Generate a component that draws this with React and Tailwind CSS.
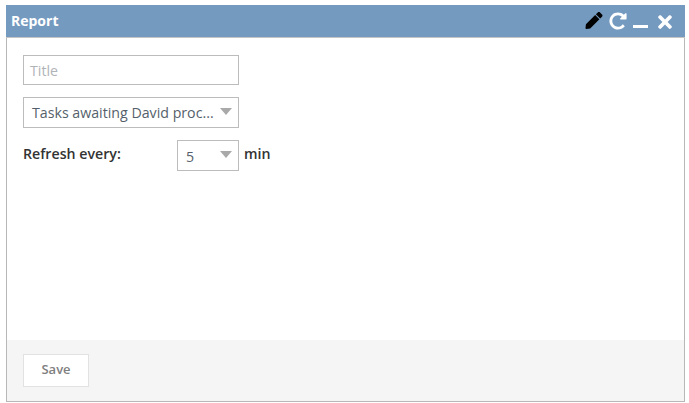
import { FaPen, FaTimes } from 'react-icons/fa';

function Caret() {
    return <span className="w-0 h-0 border-x-[6px] border-x-transparent border-t-[7px] border-t-[#a9a9a9]" />;
}

function RepeatIcon() {
    return (
        <svg viewBox="0 0 1792 1792" className="w-[20px] h-[20px] ml-[5px]" fill="currentColor">
            <path d="M1664 256v448q0 26-19 45t-45 19h-448q-42 0-59-40-17-39 14-69l138-138q-148-137-349-137-104 0-198.5 40.5t-163.5 109.5-109.5 163.5-40.5 198.5 40.5 198.5 109.5 163.5 163.5 109.5 198.5 40.5q119 0 225-52t179-147q7-10 23-12 12 0 25 9l137 138q9 8 9.5 20.5t-7.5 22.5q-109 132-264 204.5t-327 72.5q-156 0-298-61t-245-164-164-245-61-298 61-298 164-245 245-164 298-61q147 0 284.5 55.5t244.5 156.5l130-129q29-31 70-14 39 17 39 59z" />
        </svg>
    );
}

export default function App() {
    return (
        <div className="w-[689px] h-[403px] bg-white pt-[5px] pl-[6px] pr-[4px] pb-px font-['Open_Sans',sans-serif]">
            <div className="h-full flex flex-col border border-t-0 border-[#b8b8b8]">
                <div className="h-[33px] -mx-px bg-[#759abf] flex items-center justify-between pl-[6px] pr-[11px] border-b border-[#c4c4c4]">
                    <span className="text-white text-[14px] font-bold -ml-px -mt-[2px]">Report</span>
                    <div className="flex items-center text-white">
                        <FaPen className="w-[18px] h-[17px] text-black ml-px -mt-[1px]" />
                        <RepeatIcon />
                        <span className="w-[15px] h-[3px] bg-white ml-[5px] mt-[11px]" />
                        <FaTimes className="w-[18px] h-[20px] ml-[8px] mt-px" />
                    </div>
                </div>
                <div className="flex-1 flex flex-col pl-[16px] pt-[17px]">
                    <div className="w-[216px] h-[30px] border border-[#bcbcbc] pl-[6px] flex items-center text-[14.2px] text-[#b0b3b8]">
                        <span className="mt-px">Title</span>
                    </div>
                    <div className="w-[216px] h-[31px] mt-[12px] border border-[#bcbcbc] pl-[8px] pr-[6px] flex items-center justify-between text-[14.2px] text-[#555f6b]">
                        <span>Tasks awaiting David proc...</span>
                        <span className="-mt-[3px] flex"><Caret /></span>
                    </div>
                    <div className="flex items-center mt-[12px] text-[14.2px] font-semibold text-[#333333]">
                        <span className="w-[154px] -mt-[4px]">Refresh every:</span>
                        <div className="w-[62px] h-[31px] border border-[#bcbcbc] pl-[8px] pr-[6px] flex items-center justify-between font-normal text-[#555f6b]">
                            <span className="mt-[2px]">5</span>
                            <span className="-mt-[3px] flex"><Caret /></span>
                        </div>
                        <span className="ml-[5px] -mt-[4px]">min</span>
                    </div>
                </div>
                <div className="h-[61px] bg-[#f5f5f5] pl-[16px] pt-[14px]">
                    <button className="w-[66px] h-[33px] bg-white border border-[#e2e2e2] text-[13px] font-semibold text-[#808080] pb-px">
                        Save
                    </button>
                </div>
            </div>
        </div>
    );
}
